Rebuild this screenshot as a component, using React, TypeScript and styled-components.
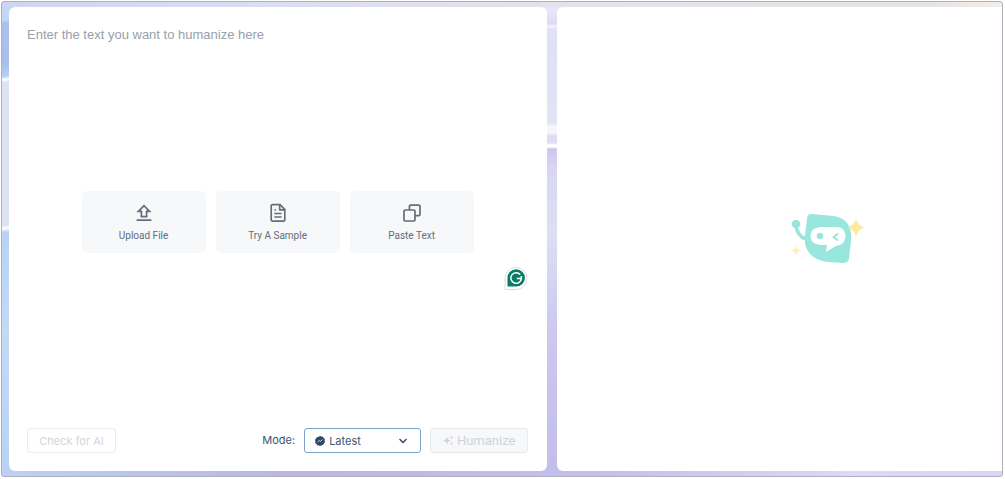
import React from 'react';
import styled, { createGlobalStyle } from 'styled-components';

const GlobalStyle = createGlobalStyle`
  * { box-sizing: border-box; }
  body { margin: 0; background: #fff; font-family: Inter, "Liberation Sans", sans-serif; }
`;

const Page = styled.div`
  height: 100vh;
  min-height: 400px;
  padding: 1px 2px 2px 1px;
  display: flex;
`;

const Frame = styled.main`
  flex: 1;
  min-width: 0;
  display: flex;
  overflow: hidden;
  padding: 5px 0 5px 7px;
  border: 1px solid #aeb0bd;
  border-radius: 3px;
  background:
    linear-gradient(90deg, #cdd6f2, #dcdff0 30%, #e3e3ec 60%, #e5e5e7 93%, #f3e9e2 97%, #eee) 0 0 / 100% 5px no-repeat,
    linear-gradient(90deg, #bcd2f1, #bbc3ea 15%, #bbb7e5 28%, #c4bfec 60%, #dcd9f5 85%, #d9d6f4) 0 100% / 100% 5px no-repeat,
    linear-gradient(173deg, #c3d6f6 0 18px, #abc0ea 21px, #a9bfeb 60px, #b9cef1 74px, #fff 77px, #dce3f2 80px,
      #dde2f2 200px, #dbe4f5 222px, #fff 225px, #b9d2f4 229px, #c3daf5 330px, #b9d2f3) 0 0 / 16px 100% no-repeat,
    linear-gradient(180deg, #e8e5fa 0 10px, #dcd9f7 22px, #f4f3fe 24px, #e0e0f6 28px, #e2e3f4 121px, #f5f5fc 124px 131px,
      #dfddf4 134px 141px, #fff 143px 145px, #cec5ee 147px, #d8d5f2 165px, #dddff4 230px, #ccc8f0 330px, #c2bdec);
`;

const Workspace = styled.div`
  display: grid;
  grid-template-columns: 1fr 1fr;
  gap: 10px;
  flex: none;
  width: calc(110% - 6px);
`;

const Panel = styled.section`
  position: relative;
  display: flex;
  flex-direction: column;
  min-width: 0;
  padding: 18px 19px 18px 18px;
  background: #fff;
  border-radius: 6px;
`;

const ResultPanel = styled(Panel)`
  align-items: center;
  justify-content: center;
  padding: 18px 18px 18px 22px;
`;

const TextInput = styled.textarea`
  flex: 5 1 0;
  min-height: 0;
  padding: 0;
  border: 0;
  outline: 0;
  resize: none;
  background: transparent;
  color: #3c4654;
  font: 13px/20px "Liberation Sans", sans-serif;
  &::placeholder { color: #98a0aa; opacity: 1; }
`;

const Actions = styled.div`
  display: flex;
  justify-content: center;
  gap: 10px;
`;

const ActionButton = styled.button`
  display: flex;
  flex-direction: column;
  align-items: center;
  justify-content: center;
  gap: 6px;
  width: 124px;
  height: 62px;
  padding: 2px 0 0;
  border: 0;
  border-radius: 5px;
  background: #f6f8fa;
  color: #646d78;
  font: 10px/14px Roboto, sans-serif;
`;

const Footer = styled.div`
  flex: 6 1 0;
  display: flex;
  align-items: flex-end;
  gap: 9px;
`;

const OutlineButton = styled.button`
  height: 25px;
  width: 89px;
  margin-right: auto;
  padding: 0;
  border: 1px solid #eaebed;
  border-radius: 3px;
  background: #fff;
  color: #d3d5d8;
  font: 11px/16px Inter, sans-serif;
`;

const SubmitButton = styled.button`
  display: flex;
  align-items: center;
  justify-content: center;
  gap: 3px;
  width: 98px;
  height: 25px;
  padding: 0;
  border: 1px solid #e7eaed;
  border-radius: 3px;
  background: #f6f8fa;
  color: #cfd3d8;
  font: 13px/16px Roboto, sans-serif;
`;

const ModeLabel = styled.label`
  color: #3d5470;
  font-size: 11px;
  line-height: 25px;
`;

const SelectWrap = styled.div`
  display: grid;
  grid-template-columns: 10px 1fr 12px;
  align-items: center;
  width: 117px;
  height: 25px;
  padding: 0 11px 0 10px;
  border: 1px solid #7ea3c6;
  border-radius: 3px;
  color: #2e4868;
  & > svg { grid-row: 1; pointer-events: none; z-index: 1; }
  & > svg:first-child { grid-column: 1; }
  & > svg:last-child { grid-column: 3; }
`;

const ModeSelect = styled.select`
  grid-row: 1;
  grid-column: 1 / -1;
  appearance: none;
  height: 23px;
  padding: 0 12px 0 14px;
  border: 0;
  outline: 0;
  background: transparent;
  color: #3d5470;
  font: 11px/16px Inter, sans-serif;
`;

const AssistantBadge = styled.button`
  position: absolute;
  right: 19px;
  top: 259px;
  width: 24px;
  height: 24px;
  padding: 0;
  border: 0;
  background: none;
`;

const UploadIcon = () => (
  <svg width="20" height="20" viewBox="0 0 20 20" fill="none" stroke="currentColor" strokeWidth="1.7">
    <path d="M10 2.6 4.4 8.4H7.4V13.6H12.6V8.4H15.6Z" />
    <path d="M2.6 17.2H17.4" />
  </svg>
);

const DocumentIcon = () => (
  <svg width="20" height="20" viewBox="0 0 20 20" fill="none" stroke="currentColor" strokeWidth="1.7" strokeLinejoin="round">
    <path d="M4.8 1.6H12L16.8 6.4V16.8Q16.8 18.2 15.4 18.2H4.6Q3.2 18.2 3.2 16.8V3Q3.2 1.6 4.6 1.6Z" />
    <path d="M11.7 2V6.8H16.4M6.4 10.5H13.6M6.4 14H13.6M6.4 7H8" />
  </svg>
);

const PasteIcon = () => (
  <svg width="20" height="20" viewBox="0 0 20 20" fill="none" stroke="currentColor" strokeWidth="1.7">
    <rect x="2" y="7" width="11" height="11" rx="1.2" />
    <path d="M7.4 7V3.4Q7.4 2.2 8.6 2.2H16.8Q18 2.2 18 3.4V11.4Q18 12.6 16.8 12.6H13" />
  </svg>
);

const LatestIcon = () => (
  <svg width="10" height="10" viewBox="0 0 10 10">
    <path d="M5 0 6.4.6 7.9.8 8.7 2.1 9.9 3.2 9.6 4.7 10 6.3 8.8 7.4 8.2 8.8 6.6 9.2 5.3 10 3.9 9.4 2.3 9.3 1.5 7.9.2 6.9.4 5.3 0 3.7 1.1 2.6 1.7 1.2 3.3.9Z" fill="currentColor" />
    <path d="m2.6 6.1 1.8-1.6 1 .9 2-1.8" fill="none" stroke="#fff" strokeWidth=".8" />
  </svg>
);

const ChevronIcon = () => (
  <svg width="12" height="12" viewBox="0 0 12 12" fill="none" stroke="currentColor" strokeWidth="1.4">
    <path d="M2.5 4 6 7.5 9.5 4" />
  </svg>
);

const SparkleIcon = () => (
  <svg width="11" height="11" viewBox="0 0 11 11" fill="currentColor">
    <path d="m4 2 1.1 2.6L7.8 5.7 5.1 6.8 4 9.5 2.9 6.8.2 5.7 2.9 4.6Z" />
    <path d="m8.6.5.5 1.4 1.4.5-1.4.5-.5 1.4-.5-1.4-1.4-.5 1.4-.5ZM8.6 7l.5 1.2 1.2.5-1.2.5-.5 1.2-.5-1.2-1.2-.5 1.2-.5Z" />
  </svg>
);

const AssistantIcon = () => (
  <svg width="24" height="24" viewBox="0 0 24 24" fill="none">
    <path d="M1 23.5V12A11 11 0 1 1 12 23.5Z" fill="#fff" stroke="#d3e1df" />
    <path d="M3.5 20.6V12A8.7 8.7 0 1 1 12.2 20.6Z" fill="#087b68" />
    <path d="M16.2 8.6A5.3 5.3 0 1 0 17.4 12.6H12.8M17.3 10V12.6" stroke="#fff" strokeWidth="1.5" />
  </svg>
);

const RobotLogo = () => (
  <svg width="74" height="54" viewBox="0 0 74 54" role="img" aria-label="Assistant">
    <path d="M5 13Q6 24 15 27" fill="none" stroke="#98e6dc" strokeWidth="3.6" strokeLinecap="round" />
    <circle cx="5" cy="12" r="4.3" fill="#98e6dc" />
    <path d="M21 2 L43 4Q59 7 60 22V29L58 47Q57 51 53 51L37 50Q18 48 14 32L14 23L16 6Q17 1.5 21 2Z" fill="#98e6dc" />
    <path d="M29 15H45Q54.5 15 54.5 24.5Q54 33 45 34L35 40L36 33H29Q19.5 32 19.5 24T29 15Z" fill="#fff" />
    <circle cx="29" cy="24" r="3.3" fill="#98e6dc" />
    <path d="M46.5 22 42.5 25 46.5 28" fill="none" stroke="#98e6dc" strokeWidth="2" strokeLinecap="round" strokeLinejoin="round" />
    <path d="M65 6.5Q67 13.5 73.5 15.5Q67 17.5 65 24.5Q63 17.5 56.5 15.5Q63 13.5 65 6.5Z" fill="#ffe89f" />
    <path d="M5 34Q6 37.5 9.5 38.5Q6 39.5 5 43Q4 39.5 .5 38.5Q4 37.5 5 34Z" fill="#fff0bd" />
  </svg>
);

const actions = [
  { label: 'Upload File', Icon: UploadIcon },
  { label: 'Try A Sample', Icon: DocumentIcon },
  { label: 'Paste Text', Icon: PasteIcon },
];

export default function App() {
  return (
    <>
      <GlobalStyle />
      <Page>
        <Frame>
          <Workspace>
            <Panel>
              <TextInput aria-label="Text to humanize" placeholder="Enter the text you want to humanize here" />
              <Actions>
                {actions.map(({ label, Icon }) => (
                  <ActionButton key={label} type="button">
                    <Icon />
                    {label}
                  </ActionButton>
                ))}
              </Actions>
              <Footer>
                <OutlineButton type="button" disabled>Check for AI</OutlineButton>
                <ModeLabel htmlFor="mode">Mode:</ModeLabel>
                <SelectWrap>
                  <LatestIcon />
                  <ModeSelect id="mode" defaultValue="latest">
                    <option value="latest">Latest</option>
                  </ModeSelect>
                  <ChevronIcon />
                </SelectWrap>
                <SubmitButton type="button" disabled>
                  <SparkleIcon />
                  Humanize
                </SubmitButton>
              </Footer>
              <AssistantBadge type="button" aria-label="Writing assistant">
                <AssistantIcon />
              </AssistantBadge>
            </Panel>
            <ResultPanel>
              <RobotLogo />
            </ResultPanel>
          </Workspace>
        </Frame>
      </Page>
    </>
  );
}
